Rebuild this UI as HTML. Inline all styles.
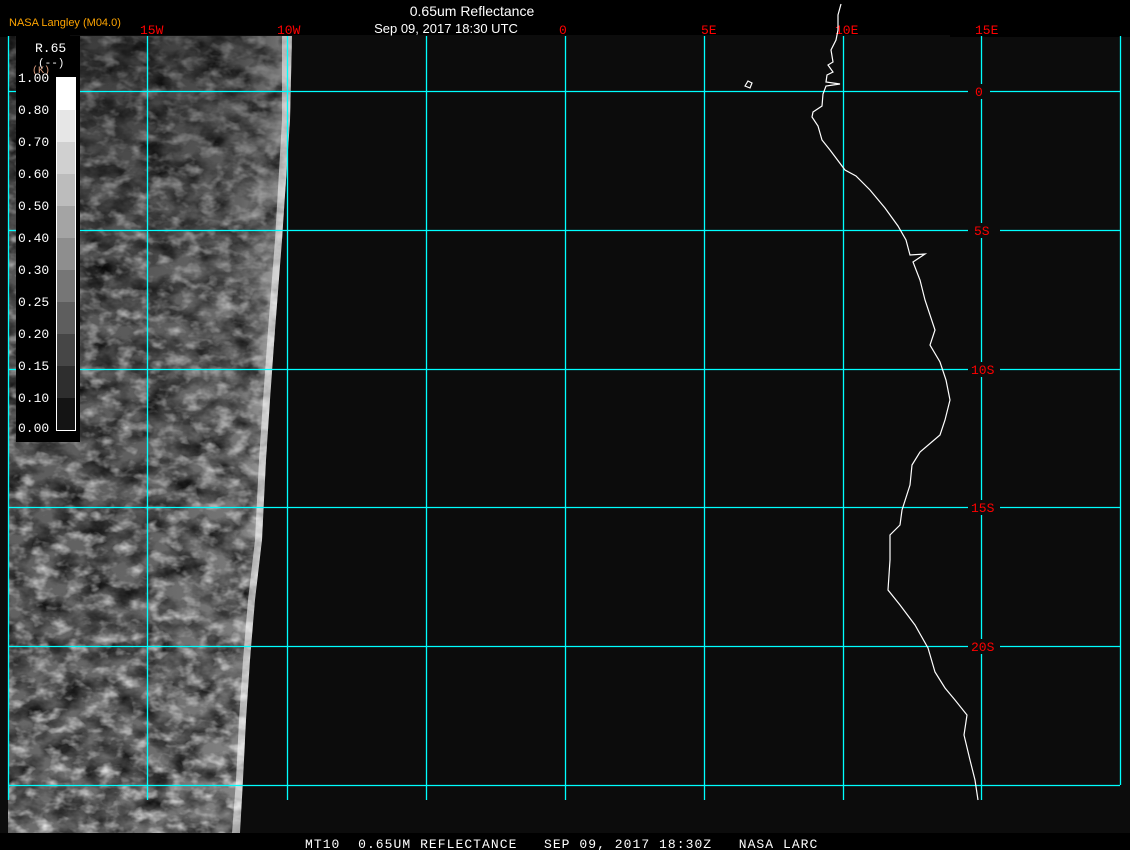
<!DOCTYPE html>
<html><head><meta charset="utf-8"><style>
html,body{margin:0;padding:0;background:#000;width:1130px;height:850px;overflow:hidden;font-family:"Liberation Mono",monospace}
svg{position:absolute;left:0;top:0}
</style></head><body>
<svg width="1130" height="850" viewBox="0 0 1130 850" xmlns="http://www.w3.org/2000/svg">
<defs>
<linearGradient id="lg" x1="0" y1="0" x2="1" y2="0">
<stop offset="0" stop-color="#6a6a6a"/><stop offset="0.5" stop-color="#707070"/><stop offset="0.8" stop-color="#888"/><stop offset="0.92" stop-color="#c0c0c0"/><stop offset="0.97" stop-color="#f0f0f0"/><stop offset="1" stop-color="#fff"/>
</linearGradient>
<linearGradient id="vg" x1="0" y1="0" x2="0" y2="1">
<stop offset="0" stop-color="#000" stop-opacity="0.45"/><stop offset="0.3" stop-color="#000" stop-opacity="0.2"/><stop offset="1" stop-color="#000" stop-opacity="0"/>
</linearGradient>
<filter id="tx" x="0" y="0" width="100%" height="100%">
<feTurbulence type="fractalNoise" baseFrequency="0.035 0.05" numOctaves="4" seed="7"/>
<feColorMatrix type="matrix" values="0 0 0 0 0  0 0 0 0 0  0 0 0 0 0  1.6 0 0 0 -0.55"/>
</filter>
<filter id="tx2" x="0" y="0" width="100%" height="100%">
<feTurbulence type="fractalNoise" baseFrequency="0.06 0.09" numOctaves="3" seed="3"/>
<feColorMatrix type="matrix" values="0 0 0 0 1  0 0 0 0 1  0 0 0 0 1  1.8 0 0 0 -0.85"/>
</filter>
<clipPath id="cl"><polygon points="8,36 292,36 290,120 282,240 275,330 270,400 266,460 262,540 255,600 250,660 246,720 243,780 240,833 8,833"/></clipPath>
</defs>
<rect x="0" y="35" width="1130" height="798" fill="#0c0c0c"/>
<rect x="0" y="35" width="70" height="2" fill="#000"/><rect x="950" y="35" width="180" height="2" fill="#000"/>
<g clip-path="url(#cl)">
<rect x="8" y="36" width="290" height="800" fill="url(#lg)"/>
<rect x="8" y="36" width="290" height="800" filter="url(#tx)"/>
<rect x="8" y="36" width="290" height="800" filter="url(#tx2)"/>
<rect x="8" y="36" width="290" height="800" fill="url(#vg)"/>
<polygon points="282,36 292,36 290,120 282,240 275,330 270,400 266,460 262,540 255,600 250,660 246,720 243,780 240,833 232,833 236,780 239,720 243,660 248,600 255,540 259,460 263,400 268,330 275,240 282,120" fill="#fff" opacity="0.55"/>
</g>
<g stroke="#00ffff" stroke-width="1.3" fill="none">
<line x1="8.5" y1="36" x2="8.5" y2="800"/><line x1="147.5" y1="36" x2="147.5" y2="800"/><line x1="287.5" y1="36" x2="287.5" y2="800"/><line x1="426.5" y1="36" x2="426.5" y2="800"/><line x1="565.5" y1="36" x2="565.5" y2="800"/><line x1="704.5" y1="36" x2="704.5" y2="800"/><line x1="843.5" y1="36" x2="843.5" y2="800"/><line x1="981.5" y1="36" x2="981.5" y2="800"/><line x1="1120.5" y1="36" x2="1120.5" y2="785"/>
<line x1="8" y1="91.5" x2="1120" y2="91.5"/><line x1="8" y1="230.5" x2="1120" y2="230.5"/><line x1="8" y1="369.5" x2="1120" y2="369.5"/><line x1="8" y1="507.5" x2="1120" y2="507.5"/><line x1="8" y1="646.5" x2="1120" y2="646.5"/><line x1="8" y1="785.5" x2="1120" y2="785.5"/>
</g>
<g fill="#0c0c0c"><rect x="968" y="84" width="22" height="15"/><rect x="968" y="223" width="32" height="15"/><rect x="968" y="362" width="32" height="15"/><rect x="968" y="500" width="32" height="15"/><rect x="968" y="639" width="32" height="15"/></g>
<g fill="#ff0000" font-family="Liberation Mono,monospace" font-size="13">
<text x="975" y="96">0</text><text x="974" y="235">5S</text><text x="971" y="374">10S</text><text x="971" y="512">15S</text><text x="971" y="651">20S</text>
<text x="140" y="34">15W</text><text x="277" y="34">10W</text><text x="559" y="34">0</text><text x="701" y="34">5E</text><text x="835" y="34">10E</text><text x="975" y="34">15E</text>
</g>
<polyline fill="none" stroke="#fff" stroke-width="1.2" points="841,4 838,15 838,30 836,40 831,50 833,62 828,65 833,72 827,75 826,82 840,84 826,86 823,94 822,106 813,112 812,117 818,126 822,140 830,150 845,170 856,176 870,190 885,208 898,226 906,240 910,255 925,254 913,262 920,280 925,300 935,330 930,345 940,362 946,380 950,400 945,420 940,435 920,452 912,465 910,485 902,510 900,525 890,535 890,560 888,590 900,605 915,625 928,648 935,672 945,688 955,700 967,715 964,735 970,760 975,780 978,800"/>
<path d="M745,86 l3,-5 l4,2 l-2,5 z" fill="none" stroke="#fff" stroke-width="1.2"/>
<rect x="16" y="36" width="64" height="406" fill="#000"/>
<g font-family="Liberation Mono,monospace" font-size="13">
<text x="35" y="52" fill="#fff">R.65</text><text x="38" y="66" fill="#fff" font-size="11">(--)</text><text x="32" y="73" fill="#e0a080" font-size="10">(K)</text>
<g fill="#fff"><text x="18" y="82">1.00</text><text x="18" y="114">0.80</text><text x="18" y="146">0.70</text><text x="18" y="178">0.60</text><text x="18" y="210">0.50</text><text x="18" y="242">0.40</text><text x="18" y="274">0.30</text><text x="18" y="306">0.25</text><text x="18" y="338">0.20</text><text x="18" y="370">0.15</text><text x="18" y="402">0.10</text><text x="18" y="432">0.00</text></g>
</g>
<g>
<rect x="56" y="77" width="19" height="33" fill="#fff"/><rect x="56" y="110" width="19" height="32" fill="#e6e6e6"/><rect x="56" y="142" width="19" height="32" fill="#d0d0d0"/><rect x="56" y="174" width="19" height="32" fill="#bcbcbc"/><rect x="56" y="206" width="19" height="32" fill="#a4a4a4"/><rect x="56" y="238" width="19" height="32" fill="#8e8e8e"/><rect x="56" y="270" width="19" height="32" fill="#767676"/><rect x="56" y="302" width="19" height="32" fill="#5e5e5e"/><rect x="56" y="334" width="19" height="32" fill="#464646"/><rect x="56" y="366" width="19" height="32" fill="#2e2e2e"/><rect x="56" y="398" width="19" height="32" fill="#141414"/>
<rect x="56.5" y="77.5" width="19" height="353" fill="none" stroke="#fff" stroke-width="1"/>
</g>
<text x="9" y="26" fill="#ffa500" font-family="Liberation Sans,sans-serif" font-size="11">NASA Langley (M04.0)</text>
<text x="472" y="16" fill="#fff" font-family="Liberation Sans,sans-serif" font-size="14" text-anchor="middle">0.65um Reflectance</text>
<text x="446" y="33" fill="#fff" font-family="Liberation Sans,sans-serif" font-size="13" text-anchor="middle">Sep 09, 2017 18:30 UTC</text>
<text x="305" y="848" fill="#fff" font-family="Liberation Mono,monospace" font-size="13" letter-spacing="1.05" xml:space="preserve" style="white-space:pre">MT10  0.65UM REFLECTANCE   SEP 09, 2017 18:30Z   NASA LARC</text>
</svg>
</body></html>
